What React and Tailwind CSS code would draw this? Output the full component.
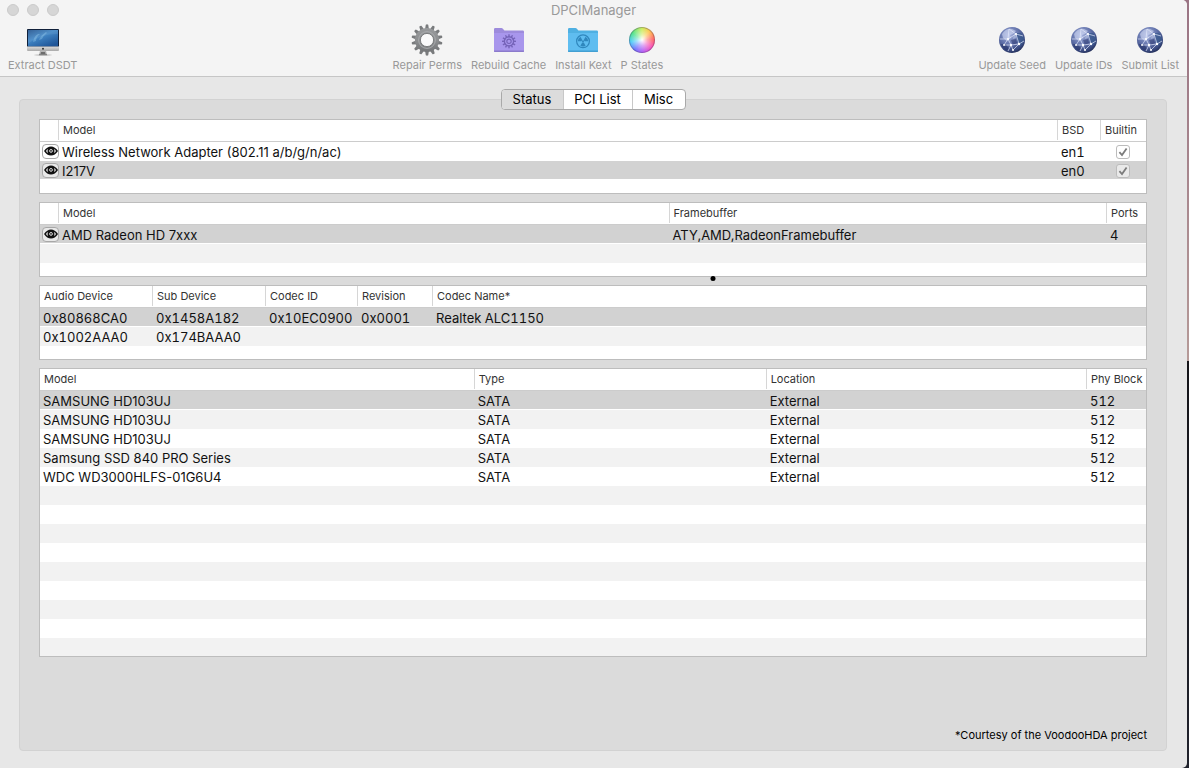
import React from "react";

const EMPTY = "";

function MonitorIcon() {
  return (
    <svg width="32" height="32" viewBox="0 0 32 32" aria-hidden="true">
      <defs>
        <linearGradient id="mon-screen" x1="0" y1="0" x2="0.7" y2="1">
          <stop offset="0" stopColor="#24558f" />
          <stop offset="0.45" stopColor="#4287c6" />
          <stop offset="1" stopColor="#1f5598" />
        </linearGradient>
        <linearGradient id="mon-chin" x1="0" y1="0" x2="0" y2="1">
          <stop offset="0" stopColor="#dcdcdc" />
          <stop offset="1" stopColor="#a9a9a9" />
        </linearGradient>
      </defs>
      <rect x="0" y="5" width="32" height="18" rx="0.8" fill="#10203a" />
      <rect x="1" y="6" width="30" height="16.5" fill="url(#mon-screen)" />
      <path d="M6 18 Q7 12 11 10 L13 10 Q9 13 9 17 Z M12 16 Q14 11 19 8 L20 9 Q16 12 15 15 Z" fill="#9cd0f2" opacity="0.35" />
      <path d="M1 6 H31 V10 C20 10 10 13 1 20 Z" fill="#ffffff" opacity="0.08" />
      <path d="M0 22.5 H32 V26 Q32 27 31 27 H1 Q0 27 0 26 Z" fill="url(#mon-chin)" />
      <circle cx="16" cy="24.8" r="1" fill="#333" />
      <path d="M13 27 H19 L20 30.5 H12 Z" fill="#b5b5b5" />
      <path d="M14 28 H18 L18.5 30 H13.5 Z" fill="#6d6d6d" />
      <ellipse cx="16" cy="31" rx="9" ry="0.7" fill="#8a8a8a" opacity="0.5" />
      <rect x="12" y="30.2" width="8" height="1" fill="#777" />
    </svg>
  );
}

const GEAR_TEETH = Array.from({ length: 14 }, (_, i) => (i * 360) / 14);

function GearIcon() {
  return (
    <svg width="32" height="32" viewBox="0 0 32 32" aria-hidden="true">
      <defs>
        <linearGradient id="gear-body" x1="0" y1="0" x2="0" y2="32" gradientUnits="userSpaceOnUse">
          <stop offset="0" stopColor="#9c9ea0" />
          <stop offset="0.5" stopColor="#8d8f91" />
          <stop offset="1" stopColor="#6b6d6f" />
        </linearGradient>
      </defs>
      <g fill="#797b7d">
        {GEAR_TEETH.map((angle) => (
          <path key={angle} d="M13.9 6 L14.8 0.7 Q16 0 17.2 0.7 L18.1 6 Z" transform={`rotate(${angle} 16 16)`} />
        ))}
      </g>
      <circle cx="16" cy="16" r="9.3" fill="none" stroke="url(#gear-body)" strokeWidth="5.6" />
      <circle cx="16" cy="16" r="8.4" fill="none" stroke="#a9abad" strokeWidth="1" />
      <circle cx="16" cy="16" r="6.6" fill="#fafafa" stroke="#66686a" strokeWidth="0.8" />
    </svg>
  );
}

const SMALL_TEETH = Array.from({ length: 12 }, (_, i) => i * 30);

function CacheFolderIcon() {
  return (
    <svg width="32" height="32" viewBox="0 0 32 32" aria-hidden="true">
      <path d="M1 5.2 Q1 4 2.2 4 H8.5 Q9.3 4 9.9 4.8 L11.4 6.6 H29.8 Q31 6.6 31 7.8 V27 Q31 28 30 28 H2 Q1 28 1 27 Z" fill="#9d8bdc" />
      <path d="M1 9 H31 V27 Q31 28 30 28 H2 Q1 28 1 27 Z" fill="#a896ec" />
      <path d="M1 26.6 H31 V27 Q31 28 30 28 H2 Q1 28 1 27 Z" fill="#8b7acb" />
      <g fill="#7563b8">
        {SMALL_TEETH.map((angle) => (
          <rect key={angle} x="15.3" y="10.3" width="1.4" height="3" transform={`rotate(${angle} 16 17.3)`} />
        ))}
      </g>
      <circle cx="16" cy="17.3" r="4.6" fill="none" stroke="#7563b8" strokeWidth="1.4" />
      <circle cx="16" cy="17.3" r="2.2" fill="none" stroke="#7563b8" strokeWidth="1.1" />
    </svg>
  );
}

function KextFolderIcon() {
  return (
    <svg width="32" height="32" viewBox="0 0 32 32" aria-hidden="true">
      <path d="M1 5.2 Q1 4 2.2 4 H8.5 Q9.3 4 9.9 4.8 L11.4 6.6 H29.8 Q31 6.6 31 7.8 V27 Q31 28 30 28 H2 Q1 28 1 27 Z" fill="#4fb0e2" />
      <path d="M1 9 H31 V27 Q31 28 30 28 H2 Q1 28 1 27 Z" fill="#5fbdf0" />
      <path d="M1 26.6 H31 V27 Q31 28 30 28 H2 Q1 28 1 27 Z" fill="#429fd2" />
      <circle cx="16" cy="17.3" r="6.4" fill="none" stroke="#2f87bd" strokeWidth="1.2" />
      <g fill="#2f87bd">
        {[0, 120, 240].map((angle) => (
          <path key={angle} d="M15.2 16 L13.4 12.8 A5.2 5.2 0 0 1 18.6 12.8 L16.8 16 Z" transform={`rotate(${angle + 180} 16 17.3)`} />
        ))}
        <circle cx="16" cy="17.3" r="1" />
      </g>
    </svg>
  );
}

function ColorWheelIcon() {
  return (
    <span className="flex size-8 items-center justify-center" aria-hidden="true">
      <span className="flex size-[26px] rounded-full border border-[#50406059] bg-[radial-gradient(circle,#ffffff_0%,#ffffff80_30%,#ffffff00_70%),conic-gradient(#c8ec50,#ffc040_40deg,#ff5a58_85deg,#f848b0_125deg,#b850f0_170deg,#6a68ff_215deg,#40c8f8_260deg,#40e080_305deg,#c8ec50)] bg-origin-border" />
    </span>
  );
}

function GlobeIcon() {
  return (
    <svg width="32" height="32" viewBox="0 0 32 32" aria-hidden="true">
      <defs>
        <radialGradient id="globe-body" cx="0.4" cy="0.3" r="0.75">
          <stop offset="0" stopColor="#a3b0dc" />
          <stop offset="0.5" stopColor="#6373ab" />
          <stop offset="0.82" stopColor="#3a4a80" />
          <stop offset="1" stopColor="#1f2a50" />
        </radialGradient>
      </defs>
      <circle cx="16" cy="16" r="13" fill="url(#globe-body)" />
      <path d="M6 10 Q10 4 16 5 L20 7 L17 10 L14 11 L15 14 L11 17 L7 14 Z" fill="#d8e0f8" opacity="0.55" />
      <path d="M18 10 L20 9 L20 14 L17 15 Z" fill="#d8e0f8" opacity="0.4" />
      <path d="M21 9 L25 9 L28 14 L27 19 L24 22 L21 17 Z" fill="#3b5a8e" opacity="0.8" />
      <path d="M5 20 L10 20 L13 25 L11 27 Q6 25 5 20 Z" fill="#27346b" opacity="0.6" />
      <path d="M15 16 L20 15 L21 19 L17 21 Z" fill="#27346b" opacity="0.5" />
      <g fill="none" stroke="#e4eafc" strokeWidth="0.8" opacity="0.85">
        <path d="M4 15 L12 15 L20 10 L27 12" />
        <path d="M12 15 L15 21 L23 20 L20 10" />
        <path d="M15 21 L17 26 L23 20 L28 17" />
        <path d="M12 15 L8 21 L15 21 L12 27" />
        <path d="M12 15 L13 5 L20 10" />
      </g>
      <g fill="#ffffff">
        <circle cx="12" cy="15" r="1.1" />
        <circle cx="20" cy="10" r="1" />
        <circle cx="15" cy="21" r="1.2" />
        <circle cx="23" cy="20" r="1.2" />
        <circle cx="17" cy="26" r="1" />
        <circle cx="8" cy="21" r="0.9" />
      </g>
    </svg>
  );
}

function ToolButton({ icon, label }) {
  return (
    <button type="button" className="flex flex-col items-center gap-[1px] text-[11px] leading-4 text-[#999999]">
      {icon}
      <span className="whitespace-nowrap">{label}</span>
    </button>
  );
}

function EyeButton({ label }) {
  return (
    <button type="button" aria-label={label} className="flex h-[15px] w-[18px] items-center justify-center rounded-[4px] border border-[#a8a8a8] bg-[#ffffff80]">
      <svg width="14" height="10" viewBox="0 0 14 10" aria-hidden="true">
        <path d="M0 5 Q3 0.4 7 0.4 T14 5 Q11 9.6 7 9.6 T0 5 Z" fill="#111" />
        <path d="M2 5 Q2.7 3.7 3.9 3 Q3.3 5 3.9 7 Q2.7 6.3 2 5 Z M12 5 Q11.3 3.7 10.1 3 Q10.7 5 10.1 7 Q11.3 6.3 12 5 Z" fill="#e4e4e4" />
        <circle cx="7" cy="4.9" r="1.4" fill="none" stroke="#f0f0f0" strokeWidth="0.9" />
      </svg>
    </button>
  );
}

function BuiltinCheck({ label }) {
  return (
    <span className="relative mx-auto flex size-[14px]">
      <input
        type="checkbox"
        defaultChecked
        disabled
        aria-label={label}
        className="size-[14px] appearance-none rounded-[3px] border border-[#bcbcbc] bg-white/50"
      />
      <svg className="absolute inset-0" width="14" height="14" viewBox="0 0 14 14" aria-hidden="true">
        <path d="M3.4 7.2 L6 10 L10.6 3.4" fill="none" stroke="#7c7c7c" strokeWidth="1.8" />
      </svg>
    </span>
  );
}

/* Rows marked with `selected` are highlighted; empty rows continue the stripes. */
function DataTable({ label, columns, rows, fill, height }) {
  const all = [...rows, ...Array.from({ length: fill }, () => ({ cells: columns.map(() => EMPTY) }))];
  return (
    <div className={`overflow-hidden border border-[#bdbdbd] bg-white ${height}`}>
      <table aria-label={label} className="w-full table-fixed border-separate border-spacing-0 text-left">
        <colgroup>
          {columns.map((c, i) => (
            <col key={i} className={c.width} />
          ))}
        </colgroup>
        <thead>
          <tr>
            {columns.map((c, i) => (
              <th key={i} scope="col" className="h-[22px] border-b border-[#cccccc] p-0 align-top text-[11px] leading-5 font-normal text-[#333333]">
                <div className={`h-5 whitespace-nowrap pl-1 ${i < columns.length - 1 ? "border-r border-[#d6d6d6]" : ""}`}>
                  {c.title}
                </div>
              </th>
            ))}
          </tr>
        </thead>
        <tbody>
          {all.map((row, r) => (
            <tr key={r} className={row.selected ? "bg-[#d2d2d2]" : r % 2 ? "bg-[#f2f2f2]" : "bg-white"}>
              {row.cells.map((cell, i) => (
                <td key={i} className="h-[19px] p-0">
                  <div className={`flex h-[19px] items-center border-b whitespace-nowrap text-[13px] leading-4 text-[#111111] ${columns[i].cell || "pt-[2px] pl-[3px]"} ${columns[i].numeric ? "tabular-nums" : ""} ${row.selected ? "border-white" : "border-transparent"}`}>
                    {cell}
                  </div>
                </td>
              ))}
            </tr>
          ))}
        </tbody>
      </table>
    </div>
  );
}

const networkColumns = [
  { title: "", width: "w-[19px]", cell: "pl-[2px]" },
  { title: "Model" },
  { title: "BSD", width: "w-[43px]", numeric: true },
  { title: "Builtin", width: "w-[45px]", cell: "pt-[2px] pr-[2px]" },
];
const networkRows = [
  { cells: [<EyeButton label="Show wireless adapter" />, "Wireless Network Adapter (802.11 a/b/g/n/ac)", "en1", <BuiltinCheck label="en1 builtin" />] },
  { selected: true, cells: [<EyeButton label="Show I217V" />, "I217V", "en0", <BuiltinCheck label="en0 builtin" />] },
];

const graphicsColumns = [
  { title: "", width: "w-[19px]", cell: "pl-[2px]" },
  { title: "Model", width: "w-[55.2%]" },
  { title: "Framebuffer" },
  { title: "Ports", width: "w-[39px]" },
];
const graphicsRows = [
  { selected: true, cells: [<EyeButton label="Show AMD Radeon" />, "AMD Radeon HD 7xxx", "ATY,AMD,RadeonFramebuffer", "4"] },
];

const audioColumns = [
  { title: "Audio Device", width: "w-[113px]", numeric: true },
  { title: "Sub Device", width: "w-[113px]", numeric: true },
  { title: "Codec ID", width: "w-[92px]", numeric: true },
  { title: "Revision", width: "w-[75px]", numeric: true },
  { title: "Codec Name*", numeric: true },
];
const audioRows = [
  { selected: true, cells: ["0x80868CA0", "0x1458A182", "0x10EC0900", "0x0001", "Realtek ALC1150"] },
  { cells: ["0x1002AAA0", "0x174BAAA0", "", "", ""] },
];

const diskColumns = [
  { title: "Model", width: "w-[39.3%]" },
  { title: "Type", width: "w-[26.4%]" },
  { title: "Location" },
  { title: "Phy Block", width: "w-[59px]", numeric: true },
];
const diskRows = [
  { selected: true, cells: ["SAMSUNG HD103UJ", "SATA", "External", "512"] },
  { cells: ["SAMSUNG HD103UJ", "SATA", "External", "512"] },
  { cells: ["SAMSUNG HD103UJ", "SATA", "External", "512"] },
  { cells: ["Samsung SSD 840 PRO Series", "SATA", "External", "512"] },
  { cells: ["WDC WD3000HLFS-01G6U4", "SATA", "External", "512"] },
];

export default function App() {
  return (
    <div className="flex min-h-screen bg-[linear-gradient(#9a7484_0%,#b59a98_47%,#15151a_47%,#20222c_100%)] pr-[2px] font-['Inter','Liberation_Sans',sans-serif]">
      <div className="flex min-w-0 flex-1 flex-col overflow-hidden rounded-r-[5px] bg-[#e7e7e7]">
        <header className="border-b border-[#c6c6c6] bg-[#f4f4f4] pb-[3px]">
          <div className="relative flex h-6 items-start justify-center">
            <div className="absolute top-[4px] left-[7px] flex gap-2">
              <button type="button" aria-label="Close" className="size-3 rounded-full border border-[#cbcbcb] bg-[#d6d6d6]" />
              <button type="button" aria-label="Minimize" className="size-3 rounded-full border border-[#cbcbcb] bg-[#d6d6d6]" />
              <button type="button" aria-label="Zoom" className="size-3 rounded-full border border-[#cbcbcb] bg-[#d6d6d6]" />
            </div>
            <h1 className="text-[13px] leading-[21px] text-[#999999]">DPCIManager</h1>
          </div>
          <nav aria-label="Toolbar" className="flex justify-between px-2">
            <ToolButton icon={<MonitorIcon />} label="Extract DSDT" />
            <div className="flex gap-[9px]">
              <ToolButton icon={<GearIcon />} label="Repair Perms" />
              <ToolButton icon={<CacheFolderIcon />} label="Rebuild Cache" />
              <ToolButton icon={<KextFolderIcon />} label="Install Kext" />
              <ToolButton icon={<ColorWheelIcon />} label="P States" />
            </div>
            <div className="flex gap-[9px]">
              <ToolButton icon={<GlobeIcon />} label="Update Seed" />
              <ToolButton icon={<GlobeIcon />} label="Update IDs" />
              <ToolButton icon={<GlobeIcon />} label="Submit List" />
            </div>
          </nav>
        </header>

        <main className="flex flex-1 flex-col pt-[22px] pr-5 pb-[17px] pl-[19px]">
          <section className="flex flex-1 flex-col rounded-[4px] border border-[#d2d2d2] bg-[#dbdbdb] px-[19px] pb-[7px]">
            <div role="tablist" className="-mt-[11px] mb-[9px] flex h-[21px] self-center overflow-hidden rounded-[4px] border border-[#a9a9a9] bg-white text-[13px] leading-[19px] text-black">
              <button type="button" role="tab" aria-selected="true" className="w-[62px] border-r border-[#c8c8c8] bg-[#dcdcdc]">Status</button>
              <button type="button" role="tab" aria-selected="false" className="w-[69px] border-r border-[#c8c8c8]">PCI List</button>
              <button type="button" role="tab" aria-selected="false" className="w-[52px]">Misc</button>
            </div>

            <div className="flex flex-col gap-2">
              <DataTable label="Network" columns={networkColumns} rows={networkRows} fill={0} height="h-[75px]" />
              <div className="relative">
                <DataTable label="Graphics" columns={graphicsColumns} rows={graphicsRows} fill={2} height="h-[75px]" />
                <span className="absolute -bottom-1 left-[60.8%] size-[5px] -translate-x-1/2 rounded-full bg-black" />
              </div>
              <DataTable label="Audio" columns={audioColumns} rows={audioRows} fill={1} height="h-[75px]" />
              <DataTable label="Disks" columns={diskColumns} rows={diskRows} fill={9} height="h-[289px]" />
            </div>

            <p className="mt-auto text-right text-[11px] leading-4 text-black">*Courtesy of the VoodooHDA project</p>
          </section>
        </main>
      </div>
    </div>
  );
}
